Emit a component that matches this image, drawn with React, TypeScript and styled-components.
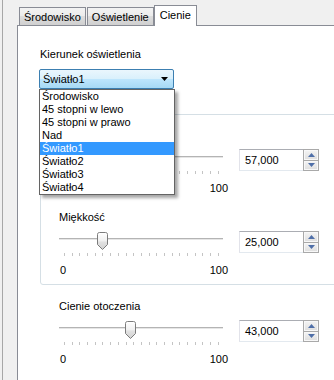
import styled, { createGlobalStyle, css } from 'styled-components';

const GlobalStyle = createGlobalStyle`
  html, body {
    margin: 0;
    padding: 0;
    background: #f0f0f0;
  }
  body {
    font-family: "Liberation Sans", Arial, sans-serif;
    font-size: 11px;
    color: #000;
  }
`;

const tabs = ['Środowisko', 'Oświetlenie', 'Cienie'];
const activeTab = 'Cienie';

const lightOptions = [
  'Środowisko',
  '45 stopni w lewo',
  '45 stopni w prawo',
  'Nad',
  'Światło1',
  'Światło2',
  'Światło3',
  'Światło4',
];
const selectedOption = 'Światło1';

const TICK_COUNT = 21;

const formatValue = (v: number) => v.toFixed(3).replace('.', ',');

function ThumbIcon() {
  return (
    <svg width="11" height="18" viewBox="0 0 11 18">
      <defs>
        <linearGradient id="thumbFill" x1="0" y1="0" x2="0" y2="1">
          <stop offset="0" stopColor="#ffffff" />
          <stop offset="0.5" stopColor="#f0f0f0" />
          <stop offset="0.55" stopColor="#e2e2e2" />
          <stop offset="1" stopColor="#d2d2d2" />
        </linearGradient>
      </defs>
      <path
        d="M0.5 2.5 Q0.5 0.5 2.5 0.5 H8.5 Q10.5 0.5 10.5 2.5 V12.5 L5.5 17.5 L0.5 12.5 Z"
        fill="url(#thumbFill)"
        stroke="#7b7b7b"
      />
      <path d="M1.5 2.5 Q1.5 1.5 2.5 1.5 H8.5 Q9.5 1.5 9.5 2.5" fill="none" stroke="#fff" />
    </svg>
  );
}

function SpinArrow({ up }: { up?: boolean }) {
  return (
    <svg width="7" height="4" viewBox="0 0 7 4">
      <path d={up ? 'M0 4 L3.5 0 L7 4 Z' : 'M0 0 L3.5 4 L7 0 Z'} fill="#4f6fa8" />
    </svg>
  );
}

function SpinBox({ value }: { value: number }) {
  return (
    <Spin>
      <SpinText>{formatValue(value)}</SpinText>
      <SpinButtons>
        <SpinButton>
          <SpinArrow up />
        </SpinButton>
        <SpinButton>
          <SpinArrow />
        </SpinButton>
      </SpinButtons>
    </Spin>
  );
}

// covered: the left part of the block sits under the open drop-down list
function SliderBlock({ label, value, covered }: { label?: string; value: number; covered?: boolean }) {
  const thumbLeft = 5 + value * 1.54 - 5.5;
  return (
    <Block>
      <BlockLabel>{label ?? '\u00a0'}</BlockLabel>
      <SliderRow>
        <Slider>
          <TrackArea>
            <Track />
            <Thumb style={{ left: thumbLeft }}>
              <ThumbIcon />
            </Thumb>
          </TrackArea>
          <Ticks>
            {Array.from({ length: TICK_COUNT }).map((_, i) => (
              <Tick key={i} />
            ))}
          </Ticks>
          <Scale>
            <ScaleMin $hidden={covered}>0</ScaleMin>
            <span>100</span>
          </Scale>
        </Slider>
        <SpinBox value={value} />
      </SliderRow>
    </Block>
  );
}

export default function App() {
  return (
    <>
      <GlobalStyle />
      <Frame>
        <Gutter />
        <TabControl>
          <TabStrip>
            {tabs.map((t) => (
              <Tab key={t} $active={t === activeTab}>
                {t}
              </Tab>
            ))}
          </TabStrip>
          <TabPanel>
            <FieldLabel>Kierunek oświetlenia</FieldLabel>
            <ComboWrap>
              <Combo>
                <span>{selectedOption}</span>
                <svg width="7" height="4" viewBox="0 0 7 4">
                  <path d="M0 0 L7 0 L3.5 4 Z" fill="#000" />
                </svg>
              </Combo>
              <DropList>
                {lightOptions.map((o) => (
                  <DropItem key={o} $selected={o === selectedOption}>
                    {o}
                  </DropItem>
                ))}
              </DropList>
            </ComboWrap>
            <GroupBox>
              <SliderBlock value={57} covered />
              <SliderBlock label="Miękkość" value={25} />
            </GroupBox>
            <Indented>
              <SliderBlock label="Cienie otoczenia" value={43} />
            </Indented>
          </TabPanel>
        </TabControl>
      </Frame>
    </>
  );
}

const Frame = styled.div`
  display: flex;
  width: 334px;
  height: 380px;
  overflow: hidden;
  background: #f0f0f0;
`;

const Gutter = styled.div`
  flex: none;
  box-sizing: border-box;
  width: 15px;
  margin-left: 2px;
  border-left: 1px solid #a7a7a7;
`;

const TabControl = styled.div`
  flex: 1;
  min-width: 0;
  display: flex;
  flex-direction: column;
`;

const TabStrip = styled.div`
  flex: none;
  height: 25px;
  display: flex;
  align-items: flex-end;
  padding-left: 2px;
`;

const Tab = styled.div<{ $active?: boolean }>`
  box-sizing: border-box;
  height: 18px;
  padding: 2px 4px 0;
  line-height: 14px;
  white-space: nowrap;
  border: 1px solid #898c95;
  border-bottom: none;
  margin-right: 1px;
  background: linear-gradient(#f3f3f3 0%, #ebebeb 50%, #dddddd 50%, #d0d0d0 100%);
  ${(p) =>
    p.$active &&
    css`
      position: relative;
      z-index: 1;
      height: 21px;
      margin: 0 0 -1px -1px;
      padding: 2px 5px 0;
      background: #fff;
    `}
`;

const TabPanel = styled.div`
  flex: 1;
  background: #fff;
  border-top: 1px solid #898c95;
  border-left: 1px solid #898c95;
  padding: 22px 0 0 21px;
`;

const FieldLabel = styled.div`
  line-height: 13px;
  margin-left: 1px;
`;

const ComboWrap = styled.div`
  position: relative;
  width: 135px;
  margin-top: 8px;
`;

const Combo = styled.div`
  box-sizing: border-box;
  height: 20px;
  display: flex;
  align-items: center;
  justify-content: space-between;
  padding: 0 5px 0 3px;
  border: 1px solid #3c7fb1;
  border-radius: 2px;
  background: linear-gradient(#eaf6fd 0%, #d9f0fc 50%, #bee6fd 50%, #a7d9f5 100%);
`;

const DropList = styled.div`
  position: absolute;
  top: 20px;
  left: 0;
  z-index: 5;
  box-sizing: border-box;
  width: 136px;
  border: 1px solid #646464;
  background: #fff;
  box-shadow: 3px 3px 3px rgba(0, 0, 0, 0.35);
`;

const DropItem = styled.div<{ $selected?: boolean }>`
  height: 13px;
  line-height: 13px;
  padding-left: 2px;
  white-space: nowrap;
  ${(p) =>
    p.$selected &&
    css`
      background: #3399ff;
      color: #fff;
    `}
`;

const GroupBox = styled.div`
  margin: 25px -12px 0 1px;
  padding: 14px 0 7px 18px;
  border: 1px solid #d5dfe5;
  border-radius: 3px;
  display: flex;
  flex-direction: column;
  gap: 16px;
`;

const Indented = styled.div`
  margin: 15px 0 0 20px;
`;

const Block = styled.div`
  display: flex;
  flex-direction: column;
`;

const BlockLabel = styled.div`
  line-height: 13px;
`;

const SliderRow = styled.div`
  display: flex;
  align-items: flex-start;
  gap: 16px;
  margin-top: 7px;
`;

const Slider = styled.div`
  width: 164px;
  display: flex;
  flex-direction: column;
`;

const TrackArea = styled.div`
  position: relative;
  height: 22px;
`;

const Track = styled.div`
  margin-top: 7px;
  height: 1px;
  background: #b4b4b4;
  border-bottom: 1px solid #e6e6e6;
`;

const Thumb = styled.div`
  position: absolute;
  top: 1px;
  width: 11px;
  height: 18px;
  line-height: 0;
`;

const Ticks = styled.div`
  display: flex;
  justify-content: space-between;
  padding: 0 4px 0 5px;
  height: 3px;
`;

const Tick = styled.div`
  width: 1px;
  height: 3px;
  background: #c4c4c4;
`;

const Scale = styled.div`
  display: flex;
  justify-content: space-between;
  margin: 8px -5px 0 1px;
  line-height: 13px;
`;

const ScaleMin = styled.span<{ $hidden?: boolean }>`
  visibility: ${(p) => (p.$hidden ? 'hidden' : 'visible')};
`;

const Spin = styled.div`
  flex: none;
  display: flex;
  width: 80px;
  height: 22px;
  box-sizing: border-box;
`;

const SpinText = styled.div`
  flex: 1;
  display: flex;
  align-items: center;
  padding-left: 5px;
  border: 1px solid;
  border-color: #abadb3 #dbdfe6 #e3e9ef #e2e3ea;
  border-right: none;
`;

const SpinButtons = styled.div`
  flex: none;
  width: 16px;
  box-sizing: border-box;
  border: 1px solid #a9a9a9;
  display: flex;
  flex-direction: column;
  gap: 1px;
  background: #a9a9a9;
`;

const SpinButton = styled.div`
  flex: 1;
  display: flex;
  align-items: center;
  justify-content: center;
  border: 1px solid #f8f8f8;
  background: linear-gradient(#f2f2f2, #e0e0e0);
`;
